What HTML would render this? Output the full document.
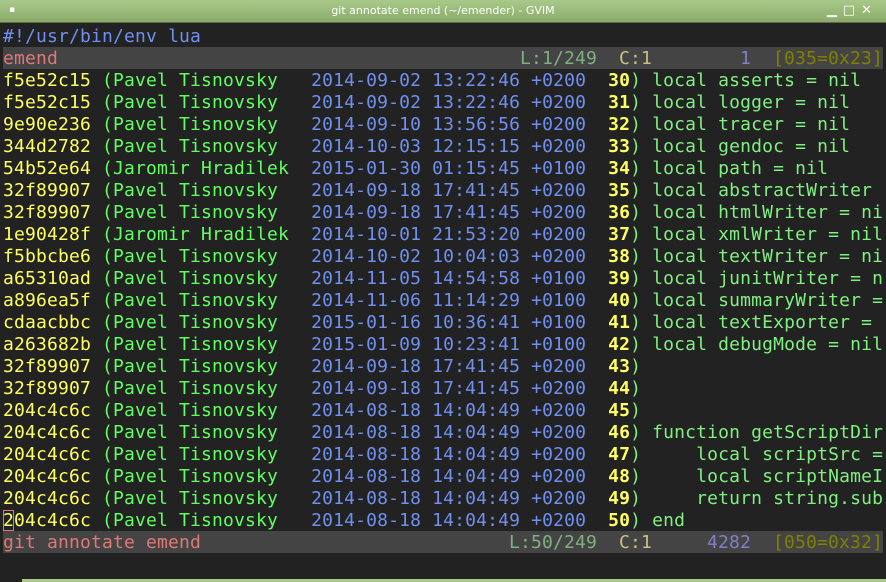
<!DOCTYPE html>
<html><head><meta charset="utf-8"><style>
html,body{margin:0;padding:0;}
body{width:886px;height:582px;background:#222;position:relative;overflow:hidden;font-family:"DejaVu Sans Mono","Liberation Mono",monospace;}
.title{position:absolute;left:0;top:0;width:886px;height:22px;background:linear-gradient(#a9c98a,#8aab68);border-bottom:1px solid #5d6b4a;color:#fff;font:11px "DejaVu Sans","Liberation Sans",sans-serif;text-align:center;line-height:21px;}
.row{position:absolute;left:3px;height:22px;line-height:22px;white-space:pre;font-size:18px;letter-spacing:0.164px;}
.st{background:#444;left:3px;width:880px;}
.h{color:#ffff60}.a{color:#60ff60}.d{color:#7090f0}.n{color:#ffff60;font-weight:bold}.c{color:#80f080}
.k{color:#e07878}
.cur{outline:1px solid #e07878;outline-offset:-1px}
.bot{position:absolute;left:0;top:577px;width:886px;height:5px;background:#222;}
.bot div{position:absolute;left:22px;top:2px;width:864px;height:3px;background:#a8c888}
</style></head><body>
<div class="title">git annotate emend (~/emender) - GVIM
<span style="position:absolute;left:9px;top:0;font-size:9px">▪</span>
<span style="position:absolute;right:8px;top:0;font-size:13px;letter-spacing:6px">▁□✕</span></div>
<div class="row" style="top:26px;color:#7090f0">#!/usr/bin/env lua</div>
<div class="row st" style="top:47px"><span class="k" style="position:relative;top:1px">emend</span><span style="position:absolute;top:1px;left:517px;color:#80b080">L:1/249</span><span style="position:absolute;top:1px;left:616px;color:#c8c080">C:1</span><span style="position:absolute;top:1px;left:737px;color:#8080c8">1</span><span style="position:absolute;top:1px;left:770px;color:#808000">[035=0x23]</span></div>
<div class="row" style="top:70px"><span class="h">f5e52c15</span> <span class="a">(Pavel Tisnovsky</span>   <span class="d">2014-09-02 13:22:46 +0200</span>  <span class="n">30</span><span class="c">) local asserts = nil</span></div>
<div class="row" style="top:92px"><span class="h">f5e52c15</span> <span class="a">(Pavel Tisnovsky</span>   <span class="d">2014-09-02 13:22:46 +0200</span>  <span class="n">31</span><span class="c">) local logger = nil</span></div>
<div class="row" style="top:114px"><span class="h">9e90e236</span> <span class="a">(Pavel Tisnovsky</span>   <span class="d">2014-09-10 13:56:56 +0200</span>  <span class="n">32</span><span class="c">) local tracer = nil</span></div>
<div class="row" style="top:136px"><span class="h">344d2782</span> <span class="a">(Pavel Tisnovsky</span>   <span class="d">2014-10-03 12:15:15 +0200</span>  <span class="n">33</span><span class="c">) local gendoc = nil</span></div>
<div class="row" style="top:158px"><span class="h">54b52e64</span> <span class="a">(Jaromir Hradilek</span>  <span class="d">2015-01-30 01:15:45 +0100</span>  <span class="n">34</span><span class="c">) local path = nil</span></div>
<div class="row" style="top:180px"><span class="h">32f89907</span> <span class="a">(Pavel Tisnovsky</span>   <span class="d">2014-09-18 17:41:45 +0200</span>  <span class="n">35</span><span class="c">) local abstractWriter</span></div>
<div class="row" style="top:202px"><span class="h">32f89907</span> <span class="a">(Pavel Tisnovsky</span>   <span class="d">2014-09-18 17:41:45 +0200</span>  <span class="n">36</span><span class="c">) local htmlWriter = ni</span></div>
<div class="row" style="top:224px"><span class="h">1e90428f</span> <span class="a">(Jaromir Hradilek</span>  <span class="d">2014-10-01 21:53:20 +0200</span>  <span class="n">37</span><span class="c">) local xmlWriter = nil</span></div>
<div class="row" style="top:246px"><span class="h">f5bbcbe6</span> <span class="a">(Pavel Tisnovsky</span>   <span class="d">2014-10-02 10:04:03 +0200</span>  <span class="n">38</span><span class="c">) local textWriter = ni</span></div>
<div class="row" style="top:268px"><span class="h">a65310ad</span> <span class="a">(Pavel Tisnovsky</span>   <span class="d">2014-11-05 14:54:58 +0100</span>  <span class="n">39</span><span class="c">) local junitWriter = n</span></div>
<div class="row" style="top:290px"><span class="h">a896ea5f</span> <span class="a">(Pavel Tisnovsky</span>   <span class="d">2014-11-06 11:14:29 +0100</span>  <span class="n">40</span><span class="c">) local summaryWriter =</span></div>
<div class="row" style="top:312px"><span class="h">cdaacbbc</span> <span class="a">(Pavel Tisnovsky</span>   <span class="d">2015-01-16 10:36:41 +0100</span>  <span class="n">41</span><span class="c">) local textExporter =</span></div>
<div class="row" style="top:334px"><span class="h">a263682b</span> <span class="a">(Pavel Tisnovsky</span>   <span class="d">2015-01-09 10:23:41 +0100</span>  <span class="n">42</span><span class="c">) local debugMode = nil</span></div>
<div class="row" style="top:356px"><span class="h">32f89907</span> <span class="a">(Pavel Tisnovsky</span>   <span class="d">2014-09-18 17:41:45 +0200</span>  <span class="n">43</span><span class="c">)</span></div>
<div class="row" style="top:378px"><span class="h">32f89907</span> <span class="a">(Pavel Tisnovsky</span>   <span class="d">2014-09-18 17:41:45 +0200</span>  <span class="n">44</span><span class="c">)</span></div>
<div class="row" style="top:400px"><span class="h">204c4c6c</span> <span class="a">(Pavel Tisnovsky</span>   <span class="d">2014-08-18 14:04:49 +0200</span>  <span class="n">45</span><span class="c">)</span></div>
<div class="row" style="top:422px"><span class="h">204c4c6c</span> <span class="a">(Pavel Tisnovsky</span>   <span class="d">2014-08-18 14:04:49 +0200</span>  <span class="n">46</span><span class="c">) function getScriptDir</span></div>
<div class="row" style="top:444px"><span class="h">204c4c6c</span> <span class="a">(Pavel Tisnovsky</span>   <span class="d">2014-08-18 14:04:49 +0200</span>  <span class="n">47</span><span class="c">)     local scriptSrc =</span></div>
<div class="row" style="top:466px"><span class="h">204c4c6c</span> <span class="a">(Pavel Tisnovsky</span>   <span class="d">2014-08-18 14:04:49 +0200</span>  <span class="n">48</span><span class="c">)     local scriptNameI</span></div>
<div class="row" style="top:488px"><span class="h">204c4c6c</span> <span class="a">(Pavel Tisnovsky</span>   <span class="d">2014-08-18 14:04:49 +0200</span>  <span class="n">49</span><span class="c">)     return string.sub</span></div>
<div class="row" style="top:510px"><span class="h"><span class="cur">2</span>04c4c6c</span> <span class="a">(Pavel Tisnovsky</span>   <span class="d">2014-08-18 14:04:49 +0200</span>  <span class="n">50</span><span class="c">) end</span></div>
<div class="row st" style="top:531px"><span class="k" style="position:relative;top:1px">git annotate emend</span><span style="position:absolute;top:1px;left:506px;color:#80b080">L:50/249</span><span style="position:absolute;top:1px;left:616px;color:#c8c080">C:1</span><span style="position:absolute;top:1px;left:704px;color:#8080c8">4282</span><span style="position:absolute;top:1px;left:770px;color:#808000">[050=0x32]</span></div>
<div class="bot"><div></div></div>
</body></html>
